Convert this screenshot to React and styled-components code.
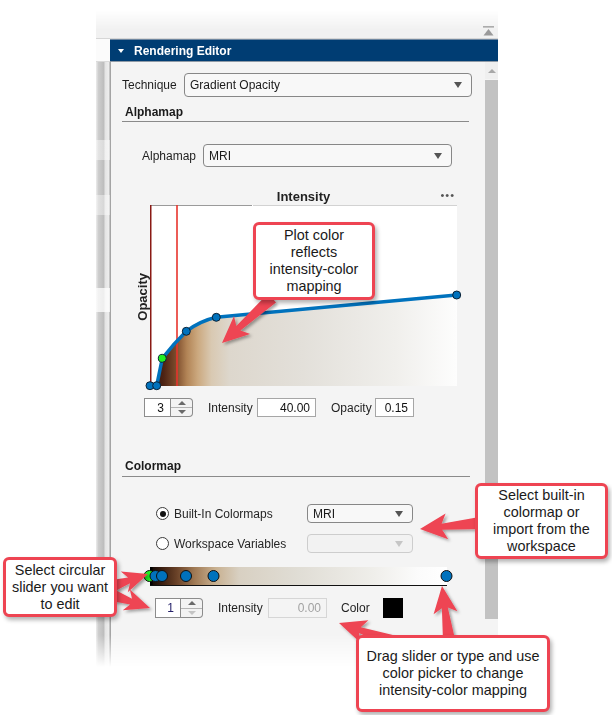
import React from "react";
import styled, { createGlobalStyle } from "styled-components";

const GlobalStyle = createGlobalStyle`
  html, body { margin: 0; padding: 0; background: #fff; }
  body { font-family: "Liberation Sans", Arial, sans-serif; }
  * { box-sizing: border-box; }
`;

const Page = styled.div`
  position: relative;
  width: 612px;
  height: 715px;
  overflow: hidden;
  background: #fff;
  padding: 10px 0 0 96px;
`;

const Window = styled.div`
  width: 402px;
  height: 657px;
  display: flex;
  flex-direction: column;
  -webkit-mask-image: linear-gradient(to bottom, transparent 0, #000 20px, #000 calc(100% - 32px), transparent 100%);
  mask-image: linear-gradient(to bottom, transparent 0, #000 20px, #000 calc(100% - 32px), transparent 100%);
`;

const TopStrip = styled.div`
  height: 29px;
  background: #f1f1f1;
  border-bottom: 1px solid #d6d6d6;
  display: flex;
  justify-content: flex-end;
  align-items: flex-end;
  padding: 0 4px 2px 0;
`;

const Body = styled.div`
  flex: 1;
  display: flex;
`;

const LeftStrip = styled.div`
  width: 14px;
  display: flex;
  flex-direction: column;
`;

const LeftTop = styled.div`
  height: 23px;
  background: #fbfbfb;
  border-bottom: 1px solid #dadada;
`;

const LeftBody = styled.div`
  flex: 1;
  background:
    linear-gradient(to bottom,
      transparent 0, transparent 78px,
      rgba(255,255,255,0.45) 78px, rgba(255,255,255,0.45) 98px,
      transparent 98px, transparent 133px,
      rgba(255,255,255,0.4) 133px, rgba(255,255,255,0.4) 153px,
      transparent 153px, transparent 226px,
      rgba(255,255,255,0.75) 226px, rgba(255,255,255,0.75) 250px,
      transparent 250px),
    linear-gradient(to right, #ececec 0, #cdcdcd 18%, #bdbdbd 55%, #e4e4e4 66%, #ededed 90%, #b0b0b0 100%);
`;

const MainCol = styled.div`
  flex: 1;
  display: flex;
  flex-direction: column;
`;

const Header = styled.div`
  height: 23px;
  background: #003d73;
  border-top: 1px solid #6f87a0;
  border-bottom: 1px solid #8f9aa6;
  display: flex;
  align-items: center;
  padding-left: 8px;
  color: #fff;
  font-weight: bold;
  font-size: 12px;
`;

const HeaderCaret = styled.span`
  width: 0;
  height: 0;
  border-left: 3.5px solid transparent;
  border-right: 3.5px solid transparent;
  border-top: 4px solid #fff;
  margin-right: 10px;
`;

const PanelRow = styled.div`
  flex: 1;
  display: flex;
  background: #f4f4f4;
`;

const Panel = styled.div`
  flex: 1;
  border-left: 1px solid #a4a4a4;
  display: flex;
  flex-direction: column;
`;

const Scrollbar = styled.div`
  width: 13px;
  display: flex;
  flex-direction: column;
`;

const ScrollUp = styled.div`
  height: 17px;
  background: #efefef;
  display: flex;
  align-items: center;
  justify-content: center;
  &::after {
    content: "";
    width: 0;
    height: 0;
    border-left: 4px solid transparent;
    border-right: 4px solid transparent;
    border-bottom: 4px solid #a8a8a8;
  }
`;

const ScrollThumb = styled.div`
  height: 539px;
  margin-top: 1px;
  background: #c2c2c2;
`;

const Row = styled.div`
  display: flex;
  align-items: center;
  height: ${(p) => p.$h}px;
  margin: ${(p) => p.$mt}px 0 0 ${(p) => p.$ml}px;
`;

const Label = styled.span`
  flex-shrink: 0;
  width: ${(p) => p.$w}px;
  margin-left: ${(p) => p.$ml || 0}px;
  font-size: 12px;
  color: #1f1f1f;
  white-space: nowrap;
`;

const Dropdown = styled.div`
  width: ${(p) => p.$w}px;
  height: 100%;
  border: 1px solid ${(p) => (p.$disabled ? "#cdcdcd" : "#878787")};
  border-radius: 4px;
  background: ${(p) => (p.$disabled ? "#f2f2f2" : "#f8f8f8")};
  display: flex;
  align-items: center;
  justify-content: space-between;
  padding: 0 9px 0 5px;
  font-size: 12px;
  color: #1a1a1a;
`;

const DropArrow = styled.span`
  width: 0;
  height: 0;
  border-left: 4.5px solid transparent;
  border-right: 4.5px solid transparent;
  border-top: 6px solid ${(p) => (p.$disabled ? "#c6c6c6" : "#555")};
`;

const Section = styled.div`
  width: ${(p) => p.$w}px;
  height: ${(p) => p.$h}px;
  margin: ${(p) => p.$mt}px 0 0 11px;
  padding-left: 3px;
  border-bottom: 1px solid #8a8a8a;
  font-size: 12px;
  font-weight: bold;
  color: #1a1a1a;
  line-height: ${(p) => p.$h - 1}px;
`;

const ChartTitleRow = styled.div`
  display: grid;
  grid-template-columns: 1fr auto 1fr;
  align-items: center;
  width: 307px;
  height: 16px;
  margin: 21px 0 0 39px;
`;

const ChartTitle = styled.span`
  grid-column: 2;
  font-size: 13px;
  font-weight: bold;
  color: #222;
`;

const Dots = styled.span`
  grid-column: 3;
  justify-self: end;
  margin-right: 2px;
  font-size: 11px;
  letter-spacing: 1px;
  color: #555;
  line-height: 8px;
  margin-top: -3px;
`;

const PlotRow = styled.div`
  display: flex;
  height: 181px;
  margin: 1px 0 0 23px;
`;

const YLabel = styled.div`
  width: 16px;
  display: flex;
  align-items: center;
  justify-content: center;
  span {
    writing-mode: vertical-rl;
    transform: rotate(180deg);
    font-size: 13px;
    font-weight: bold;
    color: #222;
    margin-top: 3px;
  }
`;

const Spinner = styled.div`
  display: flex;
  width: ${(p) => p.$w}px;
  height: 100%;
  flex-shrink: 0;
`;

const SpinField = styled.div`
  flex: 1;
  border: 1px solid #8c8c8c;
  background: #fff;
  display: flex;
  align-items: center;
  justify-content: flex-end;
  padding-right: 6px;
  font-size: 12px;
  color: ${(p) => p.$color || "#111"};
`;

const SpinButtons = styled.div`
  width: 22px;
  border: 1px solid #8c8c8c;
  border-left: none;
  border-radius: 0 4px 4px 0;
  background: #f3f3f3;
  display: flex;
  flex-direction: column;
`;

const SpinHalf = styled.div`
  flex: 1;
  display: flex;
  align-items: center;
  justify-content: center;
  border-top: ${(p) => (p.$down ? "1px solid #b4b4b4" : "none")};
  &::after {
    content: "";
    width: 0;
    height: 0;
    border-left: 4px solid transparent;
    border-right: 4px solid transparent;
    ${(p) =>
      p.$down
        ? `border-top: 4px solid ${p.$disabled ? "#c4c4c4" : "#6a6a6a"};`
        : `border-bottom: 4px solid #6a6a6a;`}
  }
`;

const Input = styled.div`
  width: ${(p) => p.$w}px;
  height: 100%;
  flex-shrink: 0;
  border: 1px solid ${(p) => (p.$disabled ? "#d6d6d6" : "#a6a6a6")};
  background: ${(p) => (p.$disabled ? "#f4f4f4" : "#fff")};
  display: flex;
  align-items: center;
  justify-content: flex-end;
  padding-right: 5px;
  font-size: 12px;
  color: ${(p) => (p.$disabled ? "#a2a2a2" : "#111")};
`;

const RadioItem = styled.label`
  display: flex;
  align-items: center;
  gap: 5px;
  width: 151px;
  flex-shrink: 0;
  font-size: 12px;
  color: #262626;
`;

const RadioCircle = styled.span`
  width: 13px;
  height: 13px;
  border-radius: 50%;
  border: 1px solid #3a3a3a;
  background: #fff;
  display: flex;
  align-items: center;
  justify-content: center;
  &::after {
    content: "";
    width: 6px;
    height: 6px;
    border-radius: 50%;
    background: ${(p) => (p.$checked ? "#111" : "transparent")};
  }
`;

const ColorbarWrap = styled.div`
  margin: 13px 0 0 32px;
  height: 20px;
`;

const Swatch = styled.div`
  width: 20px;
  height: 20px;
  background: #000;
  flex-shrink: 0;
`;

const Overlay = styled.svg`
  position: absolute;
  left: 0;
  top: 0;
  pointer-events: none;
`;

const Callout = styled.div`
  position: absolute;
  left: ${(p) => p.$x}px;
  top: ${(p) => p.$y}px;
  width: ${(p) => p.$w}px;
  height: ${(p) => p.$h}px;
  border: 3px solid #ee4452;
  border-radius: 6px;
  background: #fff;
  box-shadow: 2px 3px 4px rgba(0, 0, 0, 0.3);
  display: flex;
  align-items: center;
  justify-content: center;
  text-align: center;
  font-family: "Liberation Sans", Arial, sans-serif;
  font-size: 14.4px;
  line-height: 17px;
  color: #1a1a1a;
`;

function arrowPoints([x1, y1], [x2, y2], tailW = 12, neckW = 6, headW = 24, headL = 22) {
  const dx = x2 - x1;
  const dy = y2 - y1;
  const L = Math.hypot(dx, dy);
  const ux = dx / L;
  const uy = dy / L;
  const nx = -uy;
  const ny = ux;
  const bx = x2 - ux * headL;
  const by = y2 - uy * headL;
  const sweep = 5;
  const pts = [
    [x1 + (nx * tailW) / 2, y1 + (ny * tailW) / 2],
    [bx + (nx * neckW) / 2, by + (ny * neckW) / 2],
    [bx - ux * sweep + (nx * headW) / 2, by - uy * sweep + (ny * headW) / 2],
    [x2, y2],
    [bx - ux * sweep - (nx * headW) / 2, by - uy * sweep - (ny * headW) / 2],
    [bx - (nx * neckW) / 2, by - (ny * neckW) / 2],
    [x1 - (nx * tailW) / 2, y1 - (ny * tailW) / 2],
  ];
  return pts.map((p) => p.map((v) => v.toFixed(1)).join(",")).join(" ");
}

const arrows = [
  { from: [272, 298], to: [222, 343] },
  { from: [480, 523], to: [420, 529], hw: 26 },
  { from: [112, 586], to: [148, 574], hw: 22, hl: 20 },
  { from: [112, 595], to: [150, 608], hw: 22, hl: 20 },
  { from: [449, 640], to: [442, 586] },
  { from: [392, 641], to: [339, 623] },
];

const curvePts = [
  [0, 180.7],
  [6.7, 180.7],
  [12.3, 153.3],
  [36.3, 126.3],
  [66.3, 112.3],
  [306.7, 90],
];

const curvePath =
  "M0,180.7 L6.7,180.7 L12.3,153.3 Q23.5,139 36.3,126.3 Q50,116 66.3,112.3 L306.7,90";
const fillPath = curvePath + " L307,181 L0,181 Z";

function CollapseIcon() {
  return (
    <svg width="11" height="10" viewBox="0 0 11 10">
      <rect x="0" y="0" width="11" height="1.6" fill="#9a9a9a" />
      <polygon points="5.5,3 10.5,9.5 0.5,9.5" fill="#9a9a9a" />
    </svg>
  );
}

function Chart() {
  return (
    <svg width="307" height="181" overflow="visible">
      <defs>
        <linearGradient id="plotFill" x1="0" x2="1" y1="0" y2="0">
          <stop offset="0" stopColor="#2a0c06" />
          <stop offset="0.045" stopColor="#4e2414" />
          <stop offset="0.085" stopColor="#7c4c2c" />
          <stop offset="0.12" stopColor="#b28456" />
          <stop offset="0.155" stopColor="#cba87e" />
          <stop offset="0.2" stopColor="#d9c9b2" />
          <stop offset="0.26" stopColor="#ddd7cd" />
          <stop offset="0.5" stopColor="#e3e0da" />
          <stop offset="0.8" stopColor="#f0efec" />
          <stop offset="1" stopColor="#fdfdfd" />
        </linearGradient>
      </defs>
      <rect x="0" y="0" width="307" height="181" fill="#fff" />
      <path d={fillPath} fill="url(#plotFill)" />
      <line x1="0" y1="0.5" x2="102" y2="0.5" stroke="#9a9a9a" />
      <line x1="103" y1="0.5" x2="307" y2="0.5" stroke="#d2d2d2" />
      <line x1="0.75" y1="0" x2="0.75" y2="181" stroke="#8a1a14" strokeWidth="1.5" />
      <line x1="27" y1="0" x2="27" y2="181" stroke="#e8342c" strokeWidth="1.6" />
      <path d={curvePath} fill="none" stroke="#0072bd" strokeWidth="3.5" strokeLinejoin="round" />
      {curvePts.map(([x, y], i) => (
        <circle
          key={i}
          cx={x}
          cy={y}
          r="4"
          fill={i === 2 ? "#22ee22" : "#0072bd"}
          stroke="#0b2236"
          strokeWidth="1"
        />
      ))}
    </svg>
  );
}

function Colorbar() {
  const sliders = [12.5, 19, 43, 70.5, 303.5];
  return (
    <svg width="310" height="20" overflow="visible">
      <defs>
        <linearGradient id="cmapFill" x1="0" x2="1" y1="0" y2="0">
          <stop offset="0" stopColor="#0e0604" />
          <stop offset="0.04" stopColor="#3a1e10" />
          <stop offset="0.09" stopColor="#6a4228" />
          <stop offset="0.15" stopColor="#a07a55" />
          <stop offset="0.22" stopColor="#c8b090" />
          <stop offset="0.3" stopColor="#d8d0c2" />
          <stop offset="0.5" stopColor="#e0ddd5" />
          <stop offset="0.75" stopColor="#efeeea" />
          <stop offset="0.9" stopColor="#fbfbfb" />
          <stop offset="1" stopColor="#ffffff" />
        </linearGradient>
      </defs>
      <rect x="7" y="1" width="297" height="18" fill="url(#cmapFill)" />
      <rect x="7" y="1" width="2.5" height="18" fill="#000" />
      <line x1="7" y1="19.5" x2="304" y2="19.5" stroke="#111" strokeWidth="1" />
      <circle cx="6.5" cy="10" r="5.5" fill="#22ee22" stroke="#111" strokeWidth="1" />
      {sliders.map((x) => (
        <circle key={x} cx={x} cy="10" r="5.5" fill="#0072bd" stroke="#111" strokeWidth="1" />
      ))}
    </svg>
  );
}

export default function App() {
  return (
    <>
      <GlobalStyle />
      <Page>
        <Window>
          <TopStrip>
            <CollapseIcon />
          </TopStrip>
          <Body>
            <LeftStrip>
              <LeftTop />
              <LeftBody />
            </LeftStrip>
            <MainCol>
              <Header>
                <HeaderCaret />
                Rendering Editor
              </Header>
              <PanelRow>
                <Panel>
                  <Row $h={24} $mt={11} $ml={11}>
                    <Label $w={62}>Technique</Label>
                    <Dropdown $w={288}>
                      <span>Gradient Opacity</span>
                      <DropArrow />
                    </Dropdown>
                  </Row>
                  <Section $w={347} $h={19} $mt={6}>Alphamap</Section>
                  <Row $h={23} $mt={22} $ml={31}>
                    <Label $w={61}>Alphamap</Label>
                    <Dropdown $w={249}>
                      <span>MRI</span>
                      <DropArrow />
                    </Dropdown>
                  </Row>
                  <ChartTitleRow>
                    <ChartTitle>Intensity</ChartTitle>
                    <Dots>•••</Dots>
                  </ChartTitleRow>
                  <PlotRow>
                    <YLabel>
                      <span>Opacity</span>
                    </YLabel>
                    <Chart />
                  </PlotRow>
                  <Row $h={19} $mt={12} $ml={33}>
                    <Spinner $w={49}>
                      <SpinField>3</SpinField>
                      <SpinButtons>
                        <SpinHalf />
                        <SpinHalf $down />
                      </SpinButtons>
                    </Spinner>
                    <Label $w={49} $ml={15}>Intensity</Label>
                    <Input $w={59}>40.00</Input>
                    <Label $w={44} $ml={15}>Opacity</Label>
                    <Input $w={39}>0.15</Input>
                  </Row>
                  <Section $w={348} $h={20} $mt={40}>Colormap</Section>
                  <Row $h={19} $mt={27} $ml={45}>
                    <RadioItem>
                      <RadioCircle $checked />
                      Built-In Colormaps
                    </RadioItem>
                    <Dropdown $w={106}>
                      <span>MRI</span>
                      <DropArrow />
                    </Dropdown>
                  </Row>
                  <Row $h={19} $mt={11} $ml={45}>
                    <RadioItem>
                      <RadioCircle />
                      Workspace Variables
                    </RadioItem>
                    <Dropdown $w={106} $disabled>
                      <span />
                      <DropArrow $disabled />
                    </Dropdown>
                  </Row>
                  <ColorbarWrap>
                    <Colorbar />
                  </ColorbarWrap>
                  <Row $h={20} $mt={12} $ml={44}>
                    <Spinner $w={48}>
                      <SpinField $color="#27236b">1</SpinField>
                      <SpinButtons>
                        <SpinHalf />
                        <SpinHalf $down $disabled />
                      </SpinButtons>
                    </Spinner>
                    <Label $w={50} $ml={15}>Intensity</Label>
                    <Input $w={59} $disabled>0.00</Input>
                    <Label $w={42} $ml={14}>Color</Label>
                    <Swatch />
                  </Row>
                </Panel>
                <Scrollbar>
                  <ScrollUp />
                  <ScrollThumb />
                </Scrollbar>
              </PanelRow>
            </MainCol>
          </Body>
        </Window>

        <Overlay width="612" height="715">
          <defs>
            <filter id="arrowShadow" x="-20%" y="-20%" width="140%" height="140%">
              <feDropShadow dx="2" dy="2" stdDeviation="1.5" floodColor="#000" floodOpacity="0.35" />
            </filter>
          </defs>
          {arrows.map((a, i) => (
            <polygon
              key={i}
              points={arrowPoints(a.from, a.to, 12, 6, a.hw || 24, a.hl || 22)}
              fill="#ee4452"
              filter="url(#arrowShadow)"
            />
          ))}
        </Overlay>

        <Callout $x={253} $y={222} $w={122} $h={78}>
          Plot color
          <br />
          reflects
          <br />
          intensity-color
          <br />
          mapping
        </Callout>
        <Callout $x={475} $y={483} $w={133} $h={76}>
          Select built-in
          <br />
          colormap or
          <br />
          import from the
          <br />
          workspace
        </Callout>
        <Callout $x={3} $y={557} $w={114} $h={60}>
          Select circular
          <br />
          slider you want
          <br />
          to edit
        </Callout>
        <Callout $x={356} $y={635} $w={194} $h={77}>
          Drag slider or type and use
          <br />
          color picker to change
          <br />
          intensity-color mapping
        </Callout>
      </Page>
    </>
  );
}
